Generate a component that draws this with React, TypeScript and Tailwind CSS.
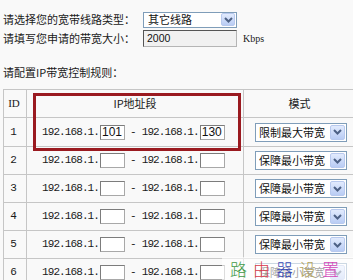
import React from 'react';

type Row = { id: number; start: string; end: string; mode: string };

const rows: Row[] = [
  { id: 1, start: '101', end: '130', mode: '限制最大带宽' },
  { id: 2, start: '', end: '', mode: '保障最小带宽' },
  { id: 3, start: '', end: '', mode: '保障最小带宽' },
  { id: 4, start: '', end: '', mode: '保障最小带宽' },
  { id: 5, start: '', end: '', mode: '保障最小带宽' },
  { id: 6, start: '', end: '', mode: '保障最小带宽' },
];

function Chevron() {
  return (
    <svg width="9" height="6" viewBox="0 0 9 6">
      <path d="M1 1 L4.5 4.5 L8 1" fill="none" stroke="#4d6185" strokeWidth="2" />
    </svg>
  );
}

function DropButton({ size }: { size: string }) {
  return (
    <span className={`${size} flex shrink-0 items-center justify-center rounded-[2px] border border-[#b8c9ee] bg-gradient-to-b from-[#e2ebfd] to-[#b9ccf4]`}>
      <Chevron />
    </span>
  );
}

function IpBox({ value }: { value: string }) {
  return (
    <span className="flex h-[15px] w-[25px] items-center border border-[#7c7c7c] border-b-[#a8a8a8] border-r-[#a8a8a8] bg-white pl-[1px] font-['Liberation_Sans',sans-serif] text-[12px] leading-none tracking-normal text-[#111]">
      {value}
    </span>
  );
}

export default function App() {
  return (
    <div className="relative h-[280px] w-[353px] overflow-hidden bg-[#f9f9f9] font-['Noto_Sans_CJK_SC',sans-serif] text-[#1a1a1a]">
      <div className="pl-[3px] pt-[12px]">
        <div className="flex h-[15px] items-center">
          <span className="w-[140px] text-[11px] leading-none">请选择您的宽带线路类型：</span>
          <div className="flex h-[16px] w-[94px] items-center justify-between border border-[#7f9db9] bg-white pl-[4px] pr-[1px]">
            <span className="text-[11px] leading-none text-[#111]">其它线路</span>
            <DropButton size="h-[13px] w-[14px]" />
          </div>
        </div>
        <div className="mt-[3px] flex h-[17px] items-center">
          <span className="w-[140px] text-[11px] leading-none">请填写您申请的带宽大小：</span>
          <div className="flex h-[17px] w-[94px] items-center border border-[#555] border-b-[#b5b5b5] border-r-[#b5b5b5] bg-[#f1f1f1] pl-[3px] font-['Liberation_Sans',sans-serif] text-[10.5px] leading-none text-[#111]">
            2000
          </div>
          <span className="ml-[6px] font-['Liberation_Serif',serif] text-[10px] leading-none">Kbps</span>
        </div>
        <div className="mt-[19px] h-[12px] text-[11px] leading-[12px]">请配置IP带宽控制规则：</div>
      </div>

      <div className="ml-[3px] mt-[11px] w-[352px] border-l border-t border-[#c6c6c6] text-[11px]">
        <div className="flex h-[28px] border-b border-[#c6c6c6]">
          <div className="flex w-[23px] items-center justify-center border-r border-[#c6c6c6] pr-[2px] font-['Liberation_Serif',serif]">ID</div>
          <div className="flex w-[217px] items-center justify-center border-r border-[#c6c6c6]">IP地址段</div>
          <div className="flex flex-1 items-center justify-center">模式</div>
        </div>
        {rows.map((r) => (
          <div key={r.id} className={`flex border-b border-[#c6c6c6] ${r.id === 1 ? 'h-[29px]' : 'h-[28px]'}`}>
            <div className="flex w-[23px] items-center justify-center border-r border-[#c6c6c6] pr-[3px] font-['Liberation_Mono',monospace] text-[11px]">
              {r.id}
            </div>
            <div className="flex w-[217px] items-center border-r border-[#c6c6c6] pl-[15px] font-['Liberation_Mono',monospace] text-[11px] tracking-[-0.9px]">
              <span>192.168.1.</span>
              <span className="ml-[1px]">
                <IpBox value={r.start} />
              </span>
              <span className="ml-[5px]">-</span>
              <span className="ml-[6px]">192.168.1.</span>
              <span className="ml-[1px]">
                <IpBox value={r.end} />
              </span>
            </div>
            <div className="flex flex-1 items-center pl-[11px]">
              <div className="flex h-[19px] w-[92px] items-center justify-between border border-[#7f9db9] bg-white pl-[3px] pr-[1px]">
                <span className="text-[11px] leading-none text-[#111]">{r.mode}</span>
                <DropButton size="h-[15px] w-[15px]" />
              </div>
            </div>
          </div>
        ))}
      </div>

      {/* highlight box around the first IP range */}
      <div className="absolute left-[33px] top-[93px] h-[58px] w-[208px] border-[3px] border-[#9a1a20]" />

      {/* watermark */}
      <div className="absolute left-[222px] top-[257px] flex h-[23px] w-[131px] items-center gap-[6px] bg-white/60 pl-[8px] text-[17px] font-light leading-none">
        <span className="text-[#3f9a45]">路</span>
        <span className="text-[#d83a48]">由</span>
        <span className="text-[#3547b5]">器</span>
        <span className="text-[#b3a35a]">设</span>
        <span className="text-[#d347b8]">置</span>
      </div>
    </div>
  );
}
